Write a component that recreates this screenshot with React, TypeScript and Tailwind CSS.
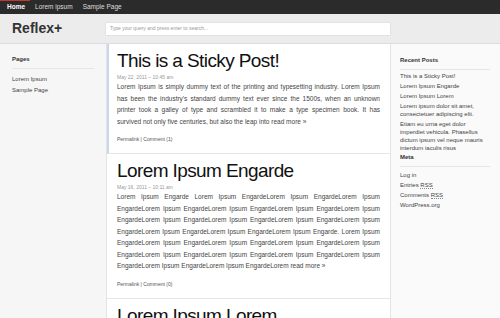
const font = { fontFamily: '"Liberation Sans", Arial, sans-serif' };

const recent = [
  ['This is a Sticky Post!'],
  ['Lorem Ipsum Engarde'],
  ['Lorem Ipsum Lorem'],
  ['Lorem ipsum dolor sit amet,', 'consectetuer adipiscing elit.'],
  ['Etiam eu urna eget dolor', 'imperdiet vehicula. Phasellus', 'dictum ipsum vel neque mauris', 'interdum iaculis risus'],
];

const four = 'EngardeLorem Ipsum EngardeLorem Ipsum EngardeLorem Ipsum EngardeLorem Ipsum';
const engarde = [
  'Lorem Ipsum Engarde Lorem Ipsum EngardeLorem Ipsum EngardeLorem Ipsum',
  four,
  four,
  'EngardeLorem Ipsum EngardeLorem Ipsum EngardeLorem Ipsum Engarde. Lorem Ipsum',
  four,
  four,
  'EngardeLorem Ipsum EngardeLorem Ipsum EngardeLorem',
].join(' ');

function Post({ title, date, body, meta, sticky }: { title: string; date: string; body: string; meta: string; sticky?: boolean }) {
  return (
    <div className={`border-b border-[#e6e6e6] pr-[10px] pt-[6px] pb-[10px] ${sticky ? 'border-l-2 border-l-[#c9d7ea] pl-[8px]' : 'pl-[10px]'}`}>
      <h2 className="text-[19px] leading-[22px] tracking-[-0.6px] text-[#111]">{title}</h2>
      <div className="mt-[1px] text-[5px] leading-[8px] text-[#999]">{date}</div>
      <p className="mt-[0px] text-justify text-[6.5px] leading-[11.5px] text-[#444]">
        {body} <span>read more »</span>
      </p>
      <div className="mt-[8px] text-[5px] leading-[8px] text-[#555]">{meta}</div>
    </div>
  );
}

export default function App() {
  return (
    <div style={font} className="h-[318px] w-[500px] overflow-hidden bg-[#f6f6f6]">
      <div className="relative flex h-[14px] items-center gap-[10px] bg-[#2b2b2b] pl-[7px] text-[6.5px] text-[#ddd]">
        <div className="absolute left-0 top-0 h-[1px] w-[30px] bg-[#c0392b]" />
        <span className="font-bold text-white">Home</span>
        <span>Lorem ipsum</span>
        <span>Sample Page</span>
      </div>
      <div className="flex h-[30px] items-center border-b border-[#dcdcdc] bg-[#ececec]">
        <div className="w-[105px] pl-[12px] text-[14px] font-bold text-[#333]">Reflex+</div>
        <div className="flex h-[14px] w-[286px] items-center rounded-[1px] border border-[#e2e2e2] bg-white pl-[4px] text-[5px] text-[#999]">
          Type your query and press enter to search...
        </div>
      </div>
      <div className="flex">
        <div className="w-[106px] shrink-0 px-[12px] pt-[11px]">
          <div className="border-b border-[#e6e6e6] pb-[4px] text-[6px] font-bold text-[#333]">Pages</div>
          <div className="mt-[5px] flex flex-col text-[6px] leading-[11px] text-[#444]">
            <span>Lorem Ipsum</span>
            <span>Sample Page</span>
          </div>
        </div>
        <div className="w-[285px] shrink-0 border-x border-[#e4e4e4] bg-white">
          <Post
            sticky
            title="This is a Sticky Post!"
            date="May 22, 2011 – 10:45 am"
            body="Lorem Ipsum is simply dummy text of the printing and typesetting industry. Lorem Ipsum has been the industry's standard dummy text ever since the 1500s, when an unknown printer took a galley of type and scrambled it to make a type specimen book. It has survived not only five centuries, but also the leap into"
            meta="Permalink | Comment (1)"
          />
          <Post title="Lorem Ipsum Engarde" date="May 16, 2011 – 10:11 am" body={engarde} meta="Permalink | Comment (0)" />
          <Post title="Lorem Ipsum Lorem" date="May 10, 2011 – 9:02 am" body="Lorem ipsum" meta="Permalink" />
        </div>
        <div className="flex-1 bg-[#fafafa] pl-[9px] pr-[10px] pt-[12px]">
          <div className="border-b border-[#e6e6e6] pb-[4px] text-[6px] font-bold text-[#333]">Recent Posts</div>
          <div className="mt-[2px] flex flex-col gap-[2px] text-[6px] leading-[8px] text-[#444]">
            {recent.map((r, i) => (
              <div key={i} className="whitespace-nowrap">
                {r.map((l, j) => (
                  <div key={j}>{l}</div>
                ))}
              </div>
            ))}
          </div>
          <div className="border-b border-[#e6e6e6] pt-[1px] pb-[4px] text-[6px] font-bold text-[#333]">Meta</div>
          <div className="mt-[3px] flex flex-col text-[6px] leading-[10px] text-[#444]">
            <span>Log in</span>
            <span>
              Entries <span className="border-b border-dotted border-[#888]">RSS</span>
            </span>
            <span>
              Comments <span className="border-b border-dotted border-[#888]">RSS</span>
            </span>
            <span>WordPress.org</span>
          </div>
        </div>
      </div>
    </div>
  );
}
